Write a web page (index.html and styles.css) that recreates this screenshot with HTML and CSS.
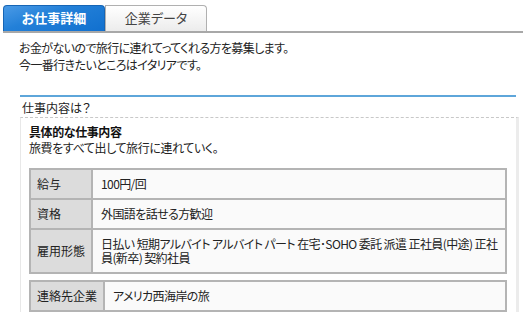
FILE: index.html
```html
<!DOCTYPE html>
<html lang="ja">
<head>
    <meta charset="UTF-8">
    <title>お仕事詳細</title>
    <link rel="stylesheet" href="styles.css">
</head>
<body>
    <div class="tabs">
        <a class="tab tab-active">お仕事詳細</a>
        <a class="tab">企業データ</a>
    </div>
    <p class="intro">
        お金がないので旅行に連れてってくれる方を募集します。<br>
        今一番行きたいところはイタリアです。
    </p>
    <div class="section">
        <h3 class="section-title">仕事内容は？</h3>
        <div class="section-box">
            <h4 class="detail-title">具体的な仕事内容</h4>
            <p class="detail-text">旅費をすべて出して旅行に連れていく。</p>
            <table class="info">
                <tr>
                    <th>給与</th>
                    <td>100円/回</td>
                </tr>
                <tr>
                    <th>資格</th>
                    <td>外国語を話せる方歓迎</td>
                </tr>
                <tr>
                    <th>雇用形態</th>
                    <td>日払い 短期アルバイト アルバイト パート 在宅･SOHO 委託 派遣 正社員(中途) 正社員(新卒) 契約社員</td>
                </tr>
            </table>
            <table class="info info-company">
                <tr>
                    <th>連絡先企業</th>
                    <td>アメリカ西海岸の旅</td>
                </tr>
            </table>
        </div>
    </div>
</body>
</html>
```

FILE: styles.css
```css
body {
    margin: 0;
    font-family: "Noto Sans CJK JP", "DejaVu Sans", sans-serif;
    font-size: 12px;
    font-feature-settings: "palt";
    color: #222;
    background-color: #fff;
}
.tabs {
    display: flex;
    margin: 0 2px 0 3px;
    padding-top: 5px;
    border-bottom: 2px solid #a8a8a8;
}
.tab {
    box-sizing: border-box;
    width: 102px;
    height: 26px;
    line-height: 24px;
    text-align: center;
    font-size: 13px;
    color: #444;
    border: 1px solid #b0b0b0;
    border-bottom: none;
    border-radius: 0 4px 0 0;
    background: linear-gradient(#ffffff, #ececec);
}
.tab-active {
    color: #fff;
    font-weight: bold;
    border-color: #1665b5;
    border-radius: 4px 4px 0 0;
    background: linear-gradient(160deg, #4a9ae6 0%, #2380d8 40%, #1170cf 100%);
}
.intro {
    margin: 6px 0 0 19px;
    line-height: 17px;
    letter-spacing: -0.6px;
    color: #222;
}
.section {
    margin: 22px 6px 0 20px;
}
.section-title {
    margin: 0 3px 0 0;
    padding: 2px 0 0 2px;
    height: 18px;
    line-height: 17px;
    font-size: 12px;
    font-weight: normal;
    border-top: 2px solid #5ea6da;
}
.section-box {
    border-top: 1px dashed #c8c8c8;
    border-left: 1px solid #e8e8e8;
    border-right: 3px solid #ececec;
    padding: 6px 9px 0 8px;
    letter-spacing: -0.4px;
}
.detail-title {
    margin: 0;
    font-size: 12px;
    line-height: 16px;
    font-weight: bold;
    color: #111;
}
.detail-text {
    margin: 0;
    line-height: 16px;
}
.info {
    width: 100%;
    margin-top: 12px;
    border: 1px solid #b4b4b4;
    border-spacing: 0;
}
.info th,
.info td {
    border: 1px solid #b4b4b4;
    padding: 7px 1px 7px 8px;
    line-height: 14px;
    text-align: left;
    vertical-align: middle;
}
.info th {
    width: 48px;
    padding: 7px 6px;
    white-space: nowrap;
    font-weight: normal;
    letter-spacing: 0;
    background-color: #dcdcdc;
}
.info td {
    letter-spacing: -0.6px;
    background-color: #fafafa;
}
.info-company {
    margin-top: 6px;
}
.info-company th {
    width: 60px;
}
```
